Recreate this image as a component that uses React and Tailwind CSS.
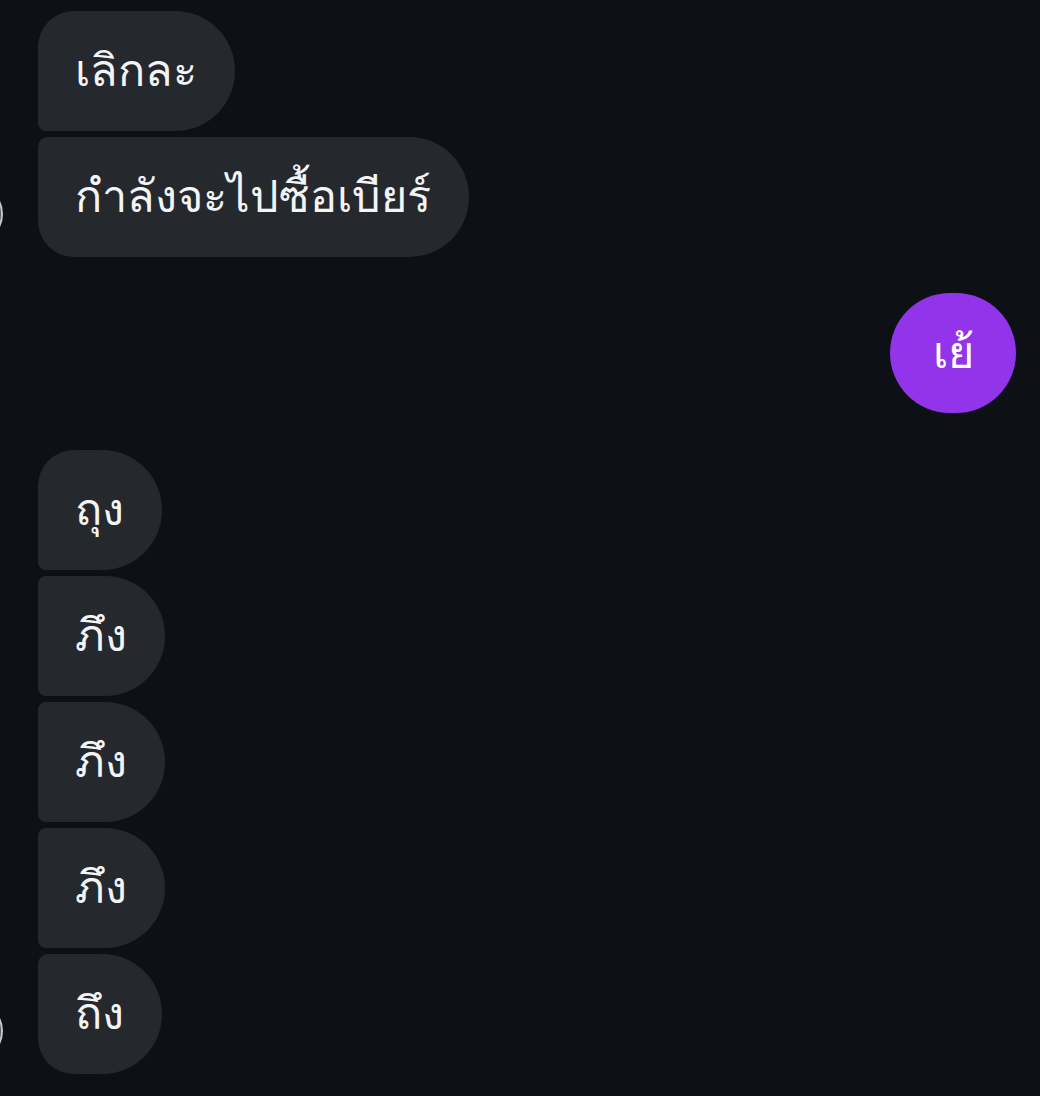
import React from "react";

function Bubble({ text, shape, avatar }) {
  return (
    <div className="flex items-end">
      <div className="w-[38px] shrink-0 flex items-end justify-start">
        {avatar ? (
          <div className="w-[60px] h-[60px] shrink-0 -ml-[57px] mb-[13px] rounded-full bg-[#55585d] border-[2px] border-[#c9c9c9]" />
        ) : null}
      </div>
      <div
        className={`h-[120px] flex items-center pl-[37px] pr-[38px] bg-[#25282d] text-[#f3f4f6] text-[45px] whitespace-nowrap ${shape}`}
      >
        {text}
      </div>
    </div>
  );
}

export default function App() {
  return (
    <div className="w-[1040px] h-[1096px] bg-[#0d1014] overflow-hidden pt-[11px] font-['Liberation_Sans',sans-serif]">
      <div className="flex flex-col gap-[6px]">
        <Bubble text="เลิกละ" shape="rounded-tl-[36px] rounded-bl-[8px] rounded-r-[60px]" />
        <Bubble text="กำลังจะไปซื้อเบียร์" shape="rounded-tl-[10px] rounded-bl-[36px] rounded-r-[60px]" avatar />
      </div>
      <div className="flex justify-end pr-[24px] mt-[36px]">
        <div className="h-[120px] w-[126px] rounded-full bg-[#9234ea] text-white text-[45px] flex items-center justify-center">
          เย้
        </div>
      </div>
      <div className="flex flex-col gap-[6px] mt-[37px]">
        <Bubble text="ถุง" shape="rounded-tl-[36px] rounded-bl-[8px] rounded-r-[60px]" />
        <Bubble text="ภึง" shape="rounded-l-[8px] rounded-r-[60px]" />
        <Bubble text="ภึง" shape="rounded-l-[8px] rounded-r-[60px]" />
        <Bubble text="ภึง" shape="rounded-l-[8px] rounded-r-[60px]" />
        <Bubble text="ถึง" shape="rounded-tl-[10px] rounded-bl-[36px] rounded-r-[60px]" avatar />
      </div>
    </div>
  );
}
